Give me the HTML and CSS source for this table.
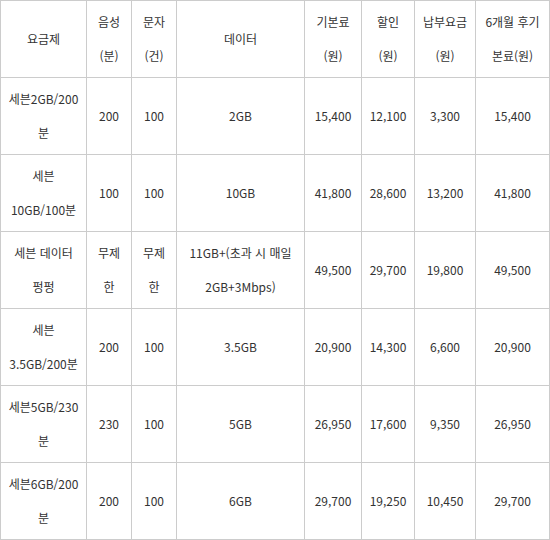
FILE: index.html
```html
<!DOCTYPE html>
<html lang="ko">
<head>
<meta charset="utf-8">
<link rel="stylesheet" href="styles.css">
</head>
<body>
<table class="plan">
  <colgroup>
    <col class="c1"><col class="c2"><col class="c3"><col class="c4"><col class="c5"><col class="c6"><col class="c7"><col class="c8">
  </colgroup>
  <tr>
    <td>요금제</td><td>음성<br>(분)</td><td>문자<br>(건)</td><td>데이터</td><td>기본료<br>(원)</td><td>할인<br>(원)</td><td>납부요금<br>(원)</td><td>6개월 후기<br>본료(원)</td>
  </tr>
  <tr>
    <td>세븐2GB/200<br>분</td><td>200</td><td>100</td><td>2GB</td><td>15,400</td><td>12,100</td><td>3,300</td><td>15,400</td>
  </tr>
  <tr>
    <td>세븐<br>10GB/100분</td><td>100</td><td>100</td><td>10GB</td><td>41,800</td><td>28,600</td><td>13,200</td><td>41,800</td>
  </tr>
  <tr>
    <td>세븐 데이터<br>펑펑</td><td>무제<br>한</td><td>무제<br>한</td><td>11GB+(초과 시 매일<br>2GB+3Mbps)</td><td>49,500</td><td>29,700</td><td>19,800</td><td>49,500</td>
  </tr>
  <tr>
    <td>세븐<br>3.5GB/200분</td><td>200</td><td>100</td><td>3.5GB</td><td>20,900</td><td>14,300</td><td>6,600</td><td>20,900</td>
  </tr>
  <tr>
    <td>세븐5GB/230<br>분</td><td>230</td><td>100</td><td>5GB</td><td>26,950</td><td>17,600</td><td>9,350</td><td>26,950</td>
  </tr>
  <tr>
    <td>세븐6GB/200<br>분</td><td>200</td><td>100</td><td>6GB</td><td>29,700</td><td>19,250</td><td>10,450</td><td>29,700</td>
  </tr>
</table>
</body>
</html>
```
FILE: styles.css
```css
html, body {
  margin: 0;
  padding: 0;
  background: #fff;
}
.plan {
  border-collapse: collapse;
  table-layout: fixed;
  width: 549px;
  font-family: "Noto Sans CJK KR", "Noto Sans", sans-serif;
  font-size: 12px;
  color: #333;
}
.plan td {
  border: 1px solid #cccccc;
  height: 76px;
  padding: 0;
  text-align: center;
  vertical-align: middle;
  line-height: 34px;
  white-space: nowrap;
  overflow: visible;
}
.c1 { width: 86px; }
.c2 { width: 45px; }
.c3 { width: 45px; }
.c4 { width: 128px; }
.c5 { width: 57px; }
.c6 { width: 53px; }
.c7 { width: 61px; }
.c8 { width: 74px; }
```
